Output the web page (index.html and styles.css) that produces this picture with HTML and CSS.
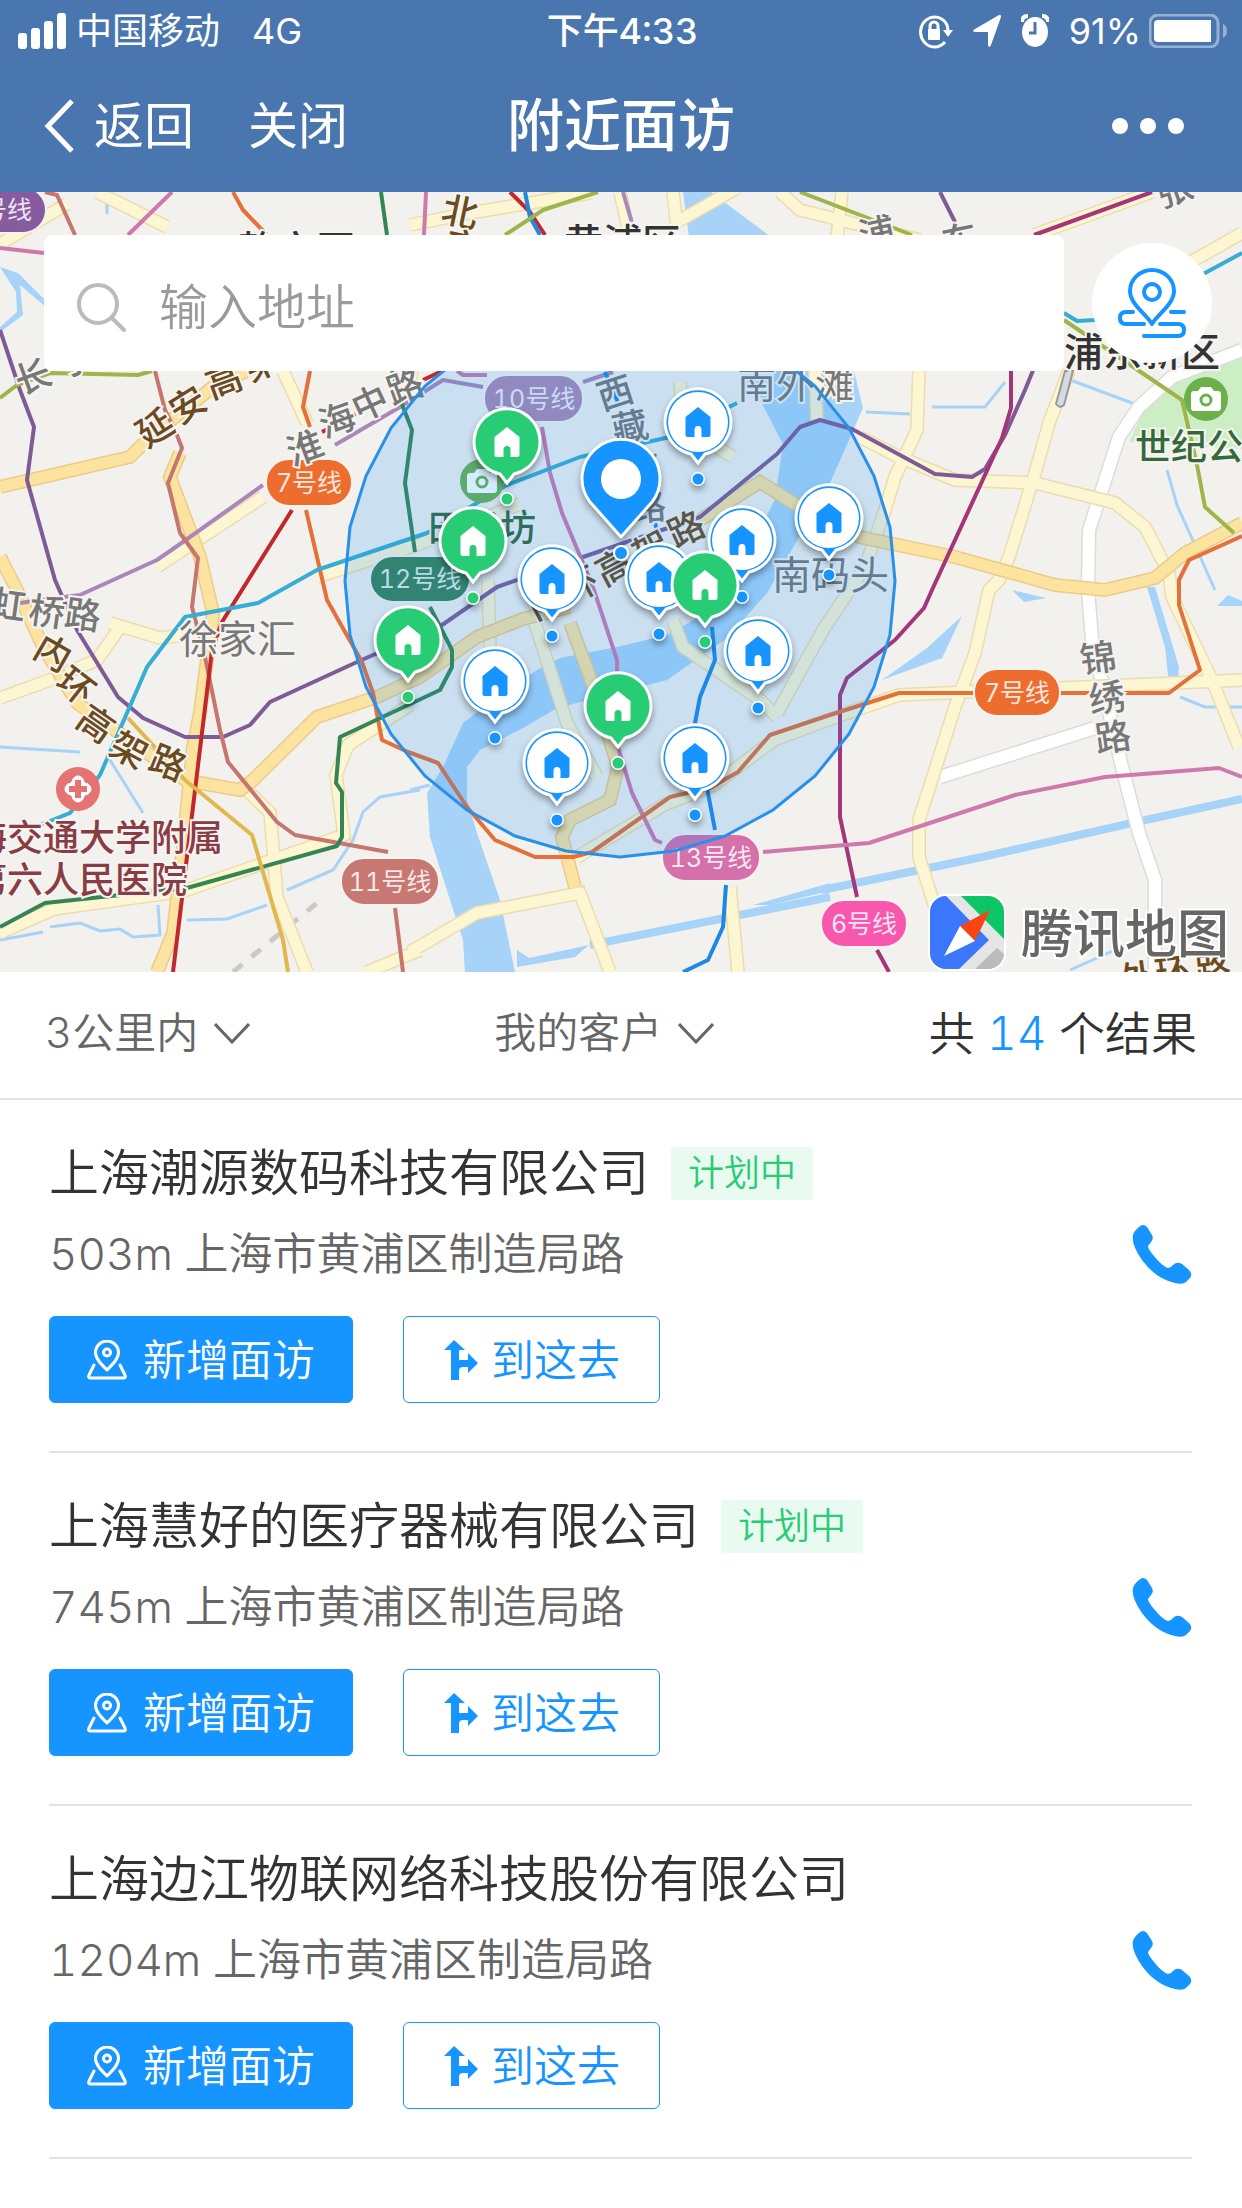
FILE: index.html
```html
<!DOCTYPE html>
<html lang="zh-CN">
<head>
<meta charset="utf-8">
<meta name="viewport" content="width=device-width, initial-scale=1">
<title>附近面访</title>
<link rel="stylesheet" href="styles.css">
</head>
<body>
<svg class="sprite" aria-hidden="true">
  <defs>
    <symbol id="i-chevron" viewBox="0 0 36 21"><path d="M1 1l17 18L35 1" fill="none" stroke="currentColor" stroke-width="3"/></symbol>
    <symbol id="i-visit" viewBox="0 0 40 40">
      <g fill="none" stroke="currentColor" stroke-width="3" stroke-linecap="round" stroke-linejoin="round">
        <path d="M20 30C14 24 8.500 18.500 8.500 12.500a11.500 11.500 0 0 1 23 0C31.500 18.500 26 24 20 30z"/>
        <circle cx="20" cy="12.500" r="3.500"/>
        <path d="M7 25L2 35q-1 3 1 3h34q2 0 1-3l-5-10"/>
      </g>
    </symbol>
    <symbol id="i-route" viewBox="0 0 36 42"><path fill="currentColor" d="M11 1l11 10h-6v10h9v-7l10 10-10 10v-6h-5q-4 0-4 4v9H8V11H1z"/></symbol>
    <symbol id="i-phone" viewBox="0 0 60 60"><path fill="currentColor" d="M7 3q4-4 8 0l5 8q2 4-1 7l-3 4q0 3 6 10 8 10 14 12 3 0 5-3 4-4 9-1l7 6q4 4 1 8l-4 4q-3 3-11 1Q24 55 10 36-1 20 1 11q1-4 6-8z"/></symbol>
    <g id="house"><path d="M0-15L12.500-5V13q0 2-2 2H3.500V8q0-4-3.500-4T-3.500 8v7h-7q-2 0-2-2V-5z"/></g>
    <g id="pin-shape"><path d="M-7 32L0 41 7 32A33 33 0 1 0-7 32z"/></g>
    <g id="m-blue">
      <use href="#pin-shape" fill="#1694ff" stroke="#fff" stroke-width="3"/>
      <circle r="30" fill="#fff"/><use href="#house" fill="#1694ff"/>
      <circle cy="57" r="7" fill="#fff"/><circle cy="57" r="5.500" fill="#1694ff"/>
    </g>
    <g id="m-green">
      <use href="#pin-shape" fill="#28cc75" stroke="#fff" stroke-width="3"/>
      <use href="#house" fill="#fff"/>
      <circle cy="57" r="7" fill="#fff"/><circle cy="57" r="5.500" fill="#28cc75"/>
    </g>
    <g id="camera">
      <circle r="22" fill="#6cb04c"/>
      <path d="M-12-8h4l3-4H5l3 4h4q3 0 3 3v14q0 3-3 3h-24q-3 0-3-3V-5q0-3 3-3z" fill="#fff"/>
      <circle cy="1" r="5" fill="none" stroke="#6cb04c" stroke-width="3"/>
    </g>
  </defs>
</svg>

<header class="header">
  <div class="status">
    <div class="status-left">
      <svg width="48" height="36" viewBox="0 0 48 36" fill="#fff" aria-hidden="true"><rect y="20" width="9" height="16" rx="3"/><rect x="13" y="15" width="9" height="21" rx="3"/><rect x="26" y="8" width="9" height="28" rx="3"/><rect x="39" width="9" height="36" rx="3"/></svg>
      <span class="carrier">中国移动</span>
      <span>4G</span>
    </div>
    <span class="clock">下午4:33</span>
    <div class="status-right">
      <svg width="34" height="36" viewBox="0 0 34 36" aria-hidden="true"><g fill="none" stroke="#fff" stroke-width="3"><path d="M26 29a14 15 0 1 1 2-17l1 5"/><path d="M11 17v-4a4 4 0 0 1 8 0v4"/></g><rect x="9" y="16" width="12" height="11" rx="1" fill="#fff"/><path d="M24 17h10l-5 7z" fill="#fff"/></svg>
      <svg width="28" height="34" viewBox="0 0 28 34" fill="#fff" aria-hidden="true"><path d="M26 1q2-1 2 2L18 31q-2 4-3 0V18H2q-4-1 0-3z"/></svg>
      <svg width="28" height="34" viewBox="0 0 28 34" aria-hidden="true"><ellipse cx="14" cy="18" rx="13" ry="15" fill="#fff"/><path d="M1 8q0-6 6-6M27 8q0-6-6-6" stroke="#fff" stroke-width="4" fill="none"/><path d="M14 8v11H8" fill="none" stroke="#4a76b0" stroke-width="3"/></svg>
      <span>91%</span>
      <svg class="battery" width="78" height="34" viewBox="0 0 78 34" aria-hidden="true"><rect x="1" y="1" width="68" height="32" rx="8" fill="none" stroke="#97b1d3" stroke-width="3"/><path d="M74 10q4 2 4 7t-4 7z" fill="#97b1d3"/><path d="M9 6h53v22H9q-4 0-4-4V10q0-4 4-4z" fill="#fff"/></svg>
    </div>
  </div>
  <nav class="nav">
    <div class="nav-left">
      <a class="nav-link back" href="#back"><svg width="30" height="54" viewBox="0 0 30 54" aria-hidden="true"><path d="M28 2L4 27l24 25" fill="none" stroke="#fff" stroke-width="5"/></svg>返回</a>
      <a class="nav-link" href="#close">关闭</a>
    </div>
    <h1 class="title">附近面访</h1>
    <button class="more" type="button" aria-label="更多"><svg width="72" height="16" viewBox="0 0 72 16" fill="#fff" aria-hidden="true"><circle cx="8" cy="8" r="8"/><circle cx="36" cy="8" r="8"/><circle cx="64" cy="8" r="8"/></svg></button>
  </nav>
</header>

<main>
<section class="map" aria-label="地图">
  <svg class="map-canvas" viewBox="0 192 1242 780">
    <rect y="192" width="1242" height="780" fill="#f2f1ed"/>
    <path fill="#cdeec5" d="M1129 442l26-55 87-30v92z"/>
    <g fill="#a6d3f7">
      <path d="M683 192h28l60 45 60 60 23 74 9 37-33 75-63 110-40 45-60 42-67 17-43 11-34 20-43 22-13 17v33l10 33 23 67 15 72h-50l-2-32-13-40-20-63-3-44 16-26 20-44 17-13 57-40 23-12 57-11 50-12 46-26 27-43 20-37 15-30 8-55-23-44-60-80z"/>
      <path d="M0 267l18 6 28 28v6l-26-22 3 30-23 17v-5l17-15-1-20z"/>
      <path d="M882 680l45-32 35-32-20 42zM1147 587l8 0 24 80-2 22-8-4-4-38zM1012 590l12 12 22-4zM1228 595l14 6v5h-25z"/>
      <path d="M517 950l12 8 60-13-14 12-58 10zM753 905l77-22v8l-60 14z"/>
    </g>
    <g class="stream">
      <path class="wide" d="M822 890l160-33 150-34 110-24M590 945l240-48"/>
      <path d="M932 407h53l20-25M1065 378l75 28M866 412l44 2M107 192v22M0 747l80 5M110 760l33 53M0 940l43-8M50 927l30-4 20 8 20-2 13 8 27-2-2-30M187 920l40-1 40-14M420 790l-40 7-17 15-10 28-20 30-46 20M410 790l20-5M1167 470l10 35 38 85M1180 697l25 10h37M1070 970l72-32"/>
    </g>
    <path d="M233 972l84-69" stroke="#c9c9c9" stroke-width="5" stroke-dasharray="12 12" fill="none"/>
    <g class="white-edge"><use href="#w-line"/></g>
    <g class="white-road"><path id="w-line" d="M1242 350l-70 27-33 30-20 30-30 93-1 60 4 50 30 127 17 66 16 47v92M940 777l155-49"/></g>
    <g class="minor-edge"><use href="#minor"/></g>
    <g class="minor-road"><g id="minor">
      <path d="M919 371l-2 59-22 47-10 33-20 57-42 63-46 83M1069 371l-20 52-14 50-26 84-10 23-10 10-14 63-20 54-36 113v37l16 50M860 437l39 20 56 23 80 3 80 20 30 24 24 46 3 24 40 83 27 67M577 857l87-52 50-20 60-45 48-18 77-27 343-15M410 952l67-39 103-20 30 79M730 887l8 85M110 623l50 15 50-6M0 698l50-18 47-20 26-37M247 790l23 23 7 84 30 75M367 972l53-22M488 580l2 67M533 617l34 106 30 54M673 620l10 27 77 53 17 17M0 244l67-40M97 192l70 35M283 371l24 52M410 225l60-12 120-20M673 192l4 35M677 222l60-34M780 192l20 18 120 30M842 192l-5 45M1034 235l118-43M620 192l10 45M157 567l106-70M317 577l103-33 100-40M410 705l-62 40-12 30 8 60-160 56-130 18-54 24M1150 285l92-52M680 382l3 45 50 30M815 371l2 50M430 280l-20 100"/>
    </g></g>
    <g class="major-edge"><use href="#major"/></g>
    <g class="major-road"><g id="major">
      <path d="M0 487l130-30 20-20 63-50 54-26M0 557l17 33 26 57 34 56 108 77 15 3 40 7 13-10 64-63 60-20 43-20 57-40 46-18 47-12M570 623l20 54 28 90-8 33-40 20-8 17 13 50M180 453l-10 24 30 80 13 56-13 100-7 34-10 100-10 86-16 39M700 520l60-38 33 21 67 34 95 20 100 28 50 5 50-12 30-25 57-30"/>
    </g></g>
    <g class="metro">
      <path stroke="#7e5b97" d="M0 330l20 60 14 37-7 53 28 100 22 50 41 67 25 21 42 19h38l27-12 20-23 87-40 85-37 55-38 86-30 117-40 77-63 23-27 20-7 32 9 83 45 37 3 13-8 20-34 20-45 9-22M940 192l15 30"/>
      <path stroke="#a53579" d="M1152 192l-118 43M1011 371v37l-9 30-70 152-8 18-29 32-48 38-7 17v122l17 80M877 950l12 22"/>
      <path stroke="#a987bb" d="M20 603l60-8 77-35 26-18 80-57M335 445l65-38 43-27 40 7M583 382l30-10M623 192l9 31"/>
      <path stroke="#c4766f" d="M45 192l12 3 18 40M155 371l10 39 10 20 7 18-14 35 12 50 18 25-6 49 13 50 15 73 8 32 49 60 18 13 93 17M395 908l8 64"/>
      <path stroke="#cf78ac" d="M172 192l-44 43M0 248l44 5M426 192l-2 43M457 371l6 4h24M542 427l8 46 12 40 31 74 24 73 1 87 14 46 23 47 7 3M763 852l106-9 146-48 90-18 114-9 23 9"/>
      <path stroke="#e4703a" d="M233 192l10 18 24 25M310 371l-7 36 7 20M306 510l21 90 35 62 11 31 9 47 26 12 30 11 29 44 28 33 40 17h38l19-5 78-55 40-9 28-16 32-37 60-20 69-22h270l31-23-21-65v-25l10-20 53-24"/>
      <path stroke="#c1272d" d="M292 510l-70 112-10 28-39 322M423 380l19-9M510 192l20 20 15 23"/>
      <path stroke="#c1272d" stroke-dasharray="6 10" d="M322 432l68-37"/>
      <path stroke="#1e88e5" d="M525 192l5 25 10 18M605 372l15 35M653 517l4 13M712 627l3 33-15 37-5 26 13 70 7 37M726 885l-3 42-15 33-25 12"/>
      <path stroke="#36add3" d="M40 825l30-12 30-38 47-108 38-50 73-14 59-33 110-37 80-48 73-28 90-20 67-34M1064 313l13 8 18-1 110-47 37-20"/>
      <path stroke="#9fb54b" d="M0 398l17-13 33-12 88 2 14-4M505 235l38-25 55-18M800 192l112 43M1064 320l118 80 15 65 8 42 29 26"/>
      <path stroke="#358554" d="M381 192l6 43M392 371l11 36 9 23-7 53 10 69M430 607l22 43v17l-12 23-100 47-4 46 6 9v45l-5 9-150 42-142 15-45 24"/>
      <path stroke="#e2b74c" d="M128 718l57 62 67 55 31 105 5 32"/>
    </g>
    <path d="M1065 371h8l-9 34q-4 4-8-1z" fill="#d4dae0" stroke="#999" stroke-width="2"/>

    <g class="badge">
      <rect x="-40" y="187" width="86" height="46" rx="23" fill="#865c9e"/><text x="-1" y="219">4号线</text>
      <rect x="266" y="459" width="86" height="47" rx="23" fill="#ed6d2f"/><text x="309" y="492">7号线</text>
      <rect x="974" y="669" width="86" height="47" rx="23" fill="#ed6d2f"/><text x="1017" y="702">7号线</text>
      <rect x="484" y="375" width="99" height="47" rx="23" fill="#ab89b4"/><text x="534" y="408">10号线</text>
      <rect x="370" y="556" width="100" height="46" rx="23" fill="#398253"/><text x="420" y="588">12号线</text>
      <rect x="662" y="834" width="98" height="47" rx="23" fill="#d670ab"/><text x="711" y="867">13号线</text>
      <rect x="341" y="858" width="98" height="47" rx="23" fill="#c87872"/><text x="390" y="891">11号线</text>
      <rect x="821" y="900" width="86" height="47" rx="23" fill="#f857ae"/><text x="864" y="933">6号线</text>
    </g>

    <use href="#camera" x="482" y="481"/>
    <use href="#camera" x="1206" y="399"/>
    <g transform="translate(78 789)"><circle r="22" fill="#e57373"/><rect x="-11" y="-11" width="22" height="22" rx="5" fill="#fff" transform="rotate(45)"/><path d="M-3-9h6v6h6v6h-6v6h-6v-6h-6v-6h6z" fill="#e57373"/><path d="M-12-12l5 5M12-12l-5 5M-12 12l5-5M12 12l-5-5" stroke="#e57373" stroke-width="4"/></g>

    <g class="place dark">
      <text x="238" y="264">静安区</text><text x="564" y="257">黄浦区</text><text x="1064" y="366">浦东新区</text>
    </g>
    <g class="place gray">
      <text x="179" y="653">徐家汇</text><text x="737" y="398">南外滩</text><text x="772" y="589">南码头</text>
    </g>
    <g class="place green"><text x="428" y="541">田子坊</text><text x="1135" y="460">世纪公园</text></g>
    <g class="place maroon"><text x="-29" y="851">海交通大学附属</text><text x="-29" y="893">第六人民医院</text></g>
    <g class="road-name gray">
      <text transform="translate(8 605) rotate(8)" dy="13">虹</text><text transform="translate(47 612) rotate(8)" dy="13">桥</text><text transform="translate(83 615) rotate(8)" dy="13">路</text>
      <text transform="translate(33 377) rotate(-20)" dy="13">长</text><text transform="translate(75 360) rotate(-20)" dy="13">宁</text>
      <text transform="translate(305 448) rotate(-20)" dy="13">淮</text><text transform="translate(337 420) rotate(-20)" dy="13">海</text><text transform="translate(370 403) rotate(-25)" dy="13">中</text><text transform="translate(405 387) rotate(-20)" dy="13">路</text>
      <text transform="translate(615 393) rotate(-18)" dy="13">西</text><text transform="translate(630 427) rotate(-12)" dy="13">藏</text><text transform="translate(643 470) rotate(-10)" dy="13">南</text><text transform="translate(648 507) rotate(-5)" dy="13">路</text>
      <text transform="translate(877 233) rotate(-12)" dy="13">浦</text><text transform="translate(960 240) rotate(-12)" dy="13">东</text><text transform="translate(1174 190) rotate(-20)" dy="13">张</text>
      <text transform="translate(1098 658) rotate(-8)" dy="13">锦</text><text transform="translate(1107 698) rotate(-8)" dy="13">绣</text><text transform="translate(1113 737) rotate(-8)" dy="13">路</text>
    </g>
    <g class="road-name brown">
      <text transform="translate(155 428) rotate(-32)" dy="13">延</text><text transform="translate(188 405) rotate(-32)" dy="13">安</text><text transform="translate(224 381) rotate(-20)" dy="13">高</text><text transform="translate(262 363) rotate(-25)" dy="13">架</text>
      <text transform="translate(53 653) rotate(30)" dy="13">内</text><text transform="translate(76 686) rotate(38)" dy="13">环</text><text transform="translate(96 724) rotate(35)" dy="13">高</text><text transform="translate(129 750) rotate(28)" dy="13">架</text><text transform="translate(168 763) rotate(22)" dy="13">路</text>
      <text transform="translate(460 212) rotate(12)" dy="13">北</text><text transform="translate(463 247) rotate(12)" dy="13">京</text>
      <text transform="translate(545 601) rotate(-28)" dy="13">内</text><text transform="translate(580 585) rotate(-28)" dy="13">环</text><text transform="translate(614 567) rotate(-28)" dy="13">高</text><text transform="translate(651 549) rotate(-28)" dy="13">架</text><text transform="translate(686 529) rotate(-25)" dy="13">路</text>
      <text transform="translate(1138 978) rotate(-8)" dy="13">外</text><text transform="translate(1173 972) rotate(-8)" dy="13">环</text><text transform="translate(1213 970) rotate(-5)" dy="13">路</text>
    </g>

    <polygon class="range" points="620,857 674,851 725,836 773,810 815,776 849,734 874,687 890,635 895,581 890,527 874,476 849,428 815,386 773,352 725,327 674,311 620,306 566,311 515,327 467,352 425,386 391,428 366,476 350,527 345,581 350,635 366,687 391,734 425,776 467,810 515,836 566,851"/>

    <g class="markers">
      <use href="#m-blue" x="698" y="422"/><use href="#m-green" x="507" y="442"/><use href="#m-green" x="473" y="541"/>
      <use href="#m-blue" x="829" y="518"/><use href="#m-blue" x="742" y="540"/><use href="#m-blue" x="552" y="579"/>
      <use href="#m-blue" x="659" y="577"/><use href="#m-green" x="705" y="585"/><use href="#m-green" x="408" y="640"/>
      <use href="#m-blue" x="758" y="651"/><use href="#m-blue" x="495" y="681"/><use href="#m-green" x="618" y="706"/>
      <use href="#m-blue" x="557" y="763"/><use href="#m-blue" x="695" y="758"/>
      <g transform="translate(621 479)">
        <path d="M0 58L-31 23A39 39 0 1 1 31 23z" fill="#1694ff" stroke="#fff" stroke-width="3" stroke-linejoin="round"/>
        <circle r="20" fill="#fff"/><circle cy="74" r="8" fill="#fff"/><circle cy="74" r="6" fill="#1694ff"/>
      </g>
    </g>

    <g transform="translate(930 896)">
      <clipPath id="logo"><rect width="74" height="73" rx="16"/></clipPath>
      <rect x="-2" y="-2" width="78" height="77" rx="18" fill="#fff"/>
      <g clip-path="url(#logo)"><path d="M0 0h74v73H0z" fill="#e5e5e5"/><path d="M0 0h16l43 44-30 29H0z" fill="#3b77fb"/><path d="M31 0h43v43z" fill="#0cc665"/><path d="M45 73l22-21 7 6v15z" fill="#bbb"/></g>
      <path d="M60 14L30 30l15 15z" fill="#fa4510"/><path d="M30 30L14 60l31-15z" fill="#fff"/>
    </g>
    <text class="brand" x="1021" y="953">腾讯地图</text>
  </svg>
  <div class="map-tools">
    <label class="search">
      <svg width="50" height="50" viewBox="0 0 50 50" aria-hidden="true"><g fill="none" stroke="#bbb" stroke-width="4" stroke-linecap="round"><circle cx="21" cy="21" r="19"/><path d="M35 35l12 12"/></g></svg>
      <input type="text" placeholder="输入地址" aria-label="输入地址">
    </label>
    <button class="locate" type="button" aria-label="拜访路线"><svg width="68" height="70" viewBox="0 0 68 70" aria-hidden="true"><g fill="none" stroke="#1694ff" stroke-width="4" stroke-linecap="round" stroke-linejoin="round"><path d="M34 56C28 46 12 36 12 23a22 21 0 0 1 44 0C56 36 40 46 34 56z"/><circle cx="34" cy="24" r="8"/><path d="M15 44H8q-6 0-6 6t6 6h18M53 44h13M42 56h18q6 0 6 6t-6 6H26"/></g></svg></button>
  </div>
</section>

<section class="filters">
  <label class="filter"><select aria-label="距离"><option>3公里内</option><option>5公里内</option></select><svg width="36" height="21" aria-hidden="true"><use href="#i-chevron"/></svg></label>
  <label class="filter"><select aria-label="客户范围"><option>我的客户</option><option>全部客户</option></select><svg width="36" height="21" aria-hidden="true"><use href="#i-chevron"/></svg></label>
  <p class="count">共 <span class="num">14</span> 个结果</p>
</section>

<ul class="list">
  <li class="item">
    <div class="info">
      <div class="name-row"><h2 class="name">上海潮源数码科技有限公司</h2><span class="tag">计划中</span></div>
      <p class="address">503m 上海市黄浦区制造局路</p>
      <div class="actions"><button class="btn primary" type="button"><svg width="40" height="40" aria-hidden="true"><use href="#i-visit"/></svg>新增面访</button><button class="btn" type="button"><svg width="36" height="42" aria-hidden="true"><use href="#i-route"/></svg>到这去</button></div>
    </div>
    <a class="call" href="#call-1" aria-label="拨打电话"><svg width="60" height="60" aria-hidden="true"><use href="#i-phone"/></svg></a>
  </li>
  <li class="item">
    <div class="info">
      <div class="name-row"><h2 class="name">上海慧好的医疗器械有限公司</h2><span class="tag">计划中</span></div>
      <p class="address">745m 上海市黄浦区制造局路</p>
      <div class="actions"><button class="btn primary" type="button"><svg width="40" height="40" aria-hidden="true"><use href="#i-visit"/></svg>新增面访</button><button class="btn" type="button"><svg width="36" height="42" aria-hidden="true"><use href="#i-route"/></svg>到这去</button></div>
    </div>
    <a class="call" href="#call-2" aria-label="拨打电话"><svg width="60" height="60" aria-hidden="true"><use href="#i-phone"/></svg></a>
  </li>
  <li class="item">
    <div class="info">
      <div class="name-row"><h2 class="name">上海边江物联网络科技股份有限公司</h2></div>
      <p class="address">1204m 上海市黄浦区制造局路</p>
      <div class="actions"><button class="btn primary" type="button"><svg width="40" height="40" aria-hidden="true"><use href="#i-visit"/></svg>新增面访</button><button class="btn" type="button"><svg width="36" height="42" aria-hidden="true"><use href="#i-route"/></svg>到这去</button></div>
    </div>
    <a class="call" href="#call-3" aria-label="拨打电话"><svg width="60" height="60" aria-hidden="true"><use href="#i-phone"/></svg></a>
  </li>
</ul>
</main>
</body>
</html>
```
FILE: styles.css
```css
* { box-sizing: border-box; }
body {
  margin: 0;
  background: #fff;
  color: #333;
  font-family: Inter, "Noto Sans CJK SC", sans-serif;
  font-weight: 350;
  font-variant-numeric: tabular-nums;
}
h1, h2, p, ul { margin: 0; padding: 0; font-weight: inherit; }
svg { display: block; flex: none; }
button, select, input { font: inherit; color: inherit; border: 0; background: none; padding: 0; margin: 0; }
a { color: inherit; text-decoration: none; }
.sprite { position: absolute; width: 0; height: 0; }

/* header */
.header { background: #4a76b0; color: #fff; }
.status {
  display: grid;
  grid-template-columns: 1fr auto 1fr;
  align-items: center;
  height: 60px;
  padding: 2px 15px 0 18px;
  font-size: 36px;
  line-height: 44px;
  font-weight: 400;
  font-variant-numeric: normal;
}
.status-left { display: flex; align-items: center; gap: 10px; }
.carrier { margin-right: 22px; }
.clock { font-weight: 500; font-variant-numeric: tabular-nums; }
.status-right { display: flex; align-items: center; justify-content: flex-end; gap: 20px; }
.battery { margin-left: -12px; }
.nav {
  display: grid;
  grid-template-columns: 1fr auto 1fr;
  align-items: center;
  height: 132px;
  padding: 0 44px;
  line-height: 72px;
}
.nav-left { display: flex; gap: 54px; font-size: 50px; font-weight: 400; }
.nav-link { display: flex; align-items: center; gap: 20px; }
.title { font-size: 57px; font-weight: 500; }
.more { justify-self: end; margin-right: 14px; }

/* map */
.map { position: relative; overflow: hidden; }
.map-canvas { width: 100%; height: auto; font-weight: 400; }
.stream { fill: none; stroke: #a6d3f7; stroke-width: 3; }
.stream .wide { stroke-width: 8; }
.white-edge { fill: none; stroke: #dcdcdc; stroke-width: 15; }
.white-road { fill: none; stroke: #fff; stroke-width: 12; }
.minor-edge, .major-edge { fill: none; }
.minor-edge { stroke: #ecdcae; stroke-width: 14; }
.minor-road { fill: none; stroke: #fdf6d2; stroke-width: 11; stroke-linejoin: round; }
.major-edge { stroke: #eccb88; stroke-width: 14; }
.major-road { fill: none; stroke: #fde3a0; stroke-width: 11; stroke-linejoin: round; }
.minor-road g, .major-road g, .white-road path { stroke: inherit; }
.metro { fill: none; stroke-width: 4; stroke-linejoin: round; }
.badge { font-size: 25px; fill: #fff; fill-opacity: 1; text-anchor: middle; }
.badge text { fill-opacity: 0.85; }
.badge rect { stroke: #f7f3ee; stroke-width: 2; }
.place { font-size: 39px; stroke: #f5f4f0; stroke-width: 4; paint-order: stroke; }
.road-name { font-size: 36px; font-weight: 500; text-anchor: middle; stroke: #f5f4f0; stroke-width: 4; paint-order: stroke; }
.place.green, .place.maroon { font-size: 36px; font-weight: 500; }
.dark { fill: #333; font-weight: 500; }
.gray { fill: #777; }
.green { fill: #35683a; }
.maroon { fill: #8a3c44; }
.brown { fill: #6b4a1e; }
.range { fill: #1890ff; fill-opacity: 0.18; stroke: #2990ea; stroke-width: 3; }
.markers { filter: drop-shadow(0 4px 3px rgba(0, 0, 0, 0.35)); }
.brand { font-size: 52px; font-weight: 500; fill: #666; stroke: #fff; stroke-width: 4; paint-order: stroke; }
.map-tools {
  position: absolute;
  top: 43px;
  left: 44px;
  right: 30px;
  display: flex;
  align-items: center;
  gap: 28px;
}
.search {
  flex: 1;
  display: flex;
  align-items: center;
  gap: 32px;
  height: 136px;
  padding: 10px 33px 0;
  background: #fff;
  border-radius: 8px;
}
.search input { flex: 1; min-width: 0; font-size: 49px; line-height: 72px; outline: 0; }
.search input::placeholder { color: #9a9a98; opacity: 1; }
.locate {
  display: grid;
  place-items: center;
  width: 120px;
  height: 120px;
  background: #fff;
  border-radius: 50%;
}

/* filters */
.filters {
  display: grid;
  grid-template-columns: 39% 1fr auto;
  align-items: center;
  height: 128px;
  padding: 0 45px 4px;
  border-bottom: 2px solid #e2e2e2;
}
.filter { display: flex; align-items: center; gap: 15px; color: #666; font-size: 42px; }
.filter select { appearance: none; line-height: 60px; }
.count { font-size: 46px; line-height: 60px; }
.num { color: #1694ff; }

/* results */
.list { list-style: none; padding: 0 50px 0 49px; }
.item { display: flex; align-items: center; justify-content: space-between; padding: 37px 0 48px; border-bottom: 2px solid #e2e2e2; }
.name-row { display: flex; align-items: center; gap: 22px; }
.name { font-size: 50px; line-height: 72px; }
.tag { padding: 0 17px; font-size: 36px; line-height: 53px; color: #28cc75; background: #e9faf1; border-radius: 4px; }
.address { margin-top: 13px; font-size: 44px; line-height: 64px; color: #666; }
.actions { display: flex; gap: 50px; margin-top: 30px; }
.btn {
  display: flex;
  align-items: center;
  justify-content: center;
  gap: 12px;
  height: 87px;
  padding: 0 39px;
  border: 1px solid #1694ff;
  border-radius: 6px;
  color: #1694ff;
  font-size: 43px;
  line-height: 60px;
}
.primary { gap: 16px; padding: 0 37px; background: #1694ff; color: #fff; }
.call { align-self: flex-start; margin-top: 87px; color: #1694ff; }
```
